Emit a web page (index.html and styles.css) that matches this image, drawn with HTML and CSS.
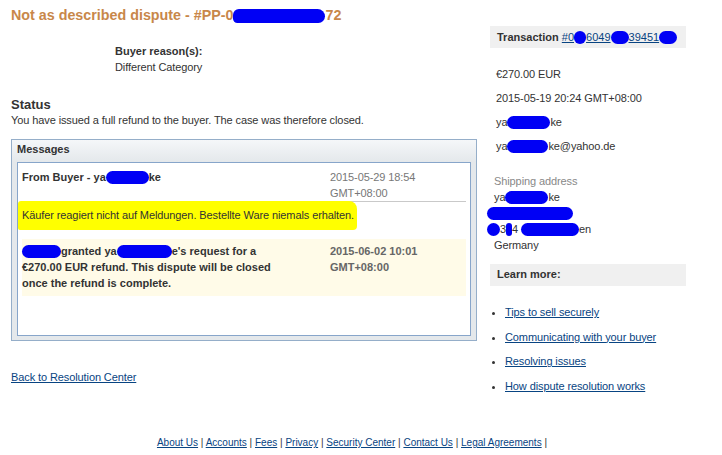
FILE: index.html
```html
<!DOCTYPE html>
<html lang="en">
<head>
    <meta charset="UTF-8">
    <title>Not as described dispute</title>
    <link rel="stylesheet" href="styles.css">
</head>
<body>

    <div class="page">
        <div class="main">
            <h1 class="title">Not as described dispute - #PP-0<span class="blob blob-title"></span>72</h1>

            <div class="reason">
                <div class="reason-label">Buyer reason(s):</div>
                <div>Different Category</div>
            </div>

            <h2 class="status-title">Status</h2>
            <p class="status-text">You have issued a full refund to the buyer. The case was therefore closed.</p>

            <div class="messages">
                <div class="messages-head">Messages</div>
                <div class="messages-body">
                    <div class="msg">
                        <div class="msg-row">
                            <div class="msg-from">From Buyer - ya<span class="blob blob-name"></span>ke</div>
                            <div class="msg-date">2015-05-29 18:54<br>GMT+08:00</div>
                        </div>
                        <div class="msg-text"><span class="marker">Käufer reagiert nicht auf Meldungen. Bestellte Ware niemals erhalten.</span></div>
                    </div>
                    <div class="msg msg-system">
                        <div class="msg-row msg-row-plain">
                            <div class="msg-from"><span class="blob blob-who"></span>granted ya<span class="blob blob-name2"></span>e's request for a €270.00 EUR refund. This dispute will be closed once the refund is complete.</div>
                            <div class="msg-date">2015-06-02 10:01<br>GMT+08:00</div>
                        </div>
                    </div>
                </div>
            </div>

            <p class="back"><a href="#">Back to Resolution Center</a></p>
        </div>

        <aside class="side">
            <div class="side-head">Transaction <a href="#" class="txn-link">#0<span class="blob blob-s"></span>6049<span class="blob blob-m"></span>39451<span class="blob blob-m"></span></a></div>

            <div class="info">
                <p>€270.00 EUR</p>
                <p>2015-05-19 20:24 GMT+08:00</p>
                <p>ya<span class="blob blob-name"></span>ke</p>
                <p>ya<span class="blob blob-mail"></span>ke@yahoo.de</p>
            </div>

            <div class="ship">
                <div class="ship-label">Shipping address</div>
                <div>ya<span class="blob blob-name"></span>ke</div>
                <div><span class="blob blob-street"></span></div>
                <div><span class="blob blob-zip"></span>3<span class="blob blob-dot"></span>4 <span class="blob blob-city"></span>en</div>
                <div>Germany</div>
            </div>

            <div class="learn-head">Learn more:</div>
            <ul class="learn-list">
                <li><a href="#">Tips to sell securely</a></li>
                <li><a href="#">Communicating with your buyer</a></li>
                <li><a href="#">Resolving issues</a></li>
                <li><a href="#">How dispute resolution works</a></li>
            </ul>
        </aside>
    </div>

    <div class="footer">
        <a href="#">About Us</a> | <a href="#">Accounts</a> | <a href="#">Fees</a> | <a href="#">Privacy</a> | <a href="#">Security Center</a> | <a href="#">Contact Us</a> | <a href="#">Legal Agreements</a> |
    </div>

</body>
</html>
```

FILE: styles.css
```css
body {
    margin: 0;
    font-family: "Liberation Sans", Arial, sans-serif;
    font-size: 11px;
    line-height: 16px;
    letter-spacing: -0.1px;
    color: #333;
    background-color: #ffffff;
}
a {
    color: #084482;
}
.page {
    display: flex;
    padding-left: 11px;
}
.main {
    width: 466px;
}
.side {
    width: 196px;
    margin-left: 13px;
}

/* blue scribbles over private data */
.blob {
    display: inline-block;
    height: 13px;
    vertical-align: -3px;
    background: #0000f5;
    border-radius: 7px;
}
.blob-title {
    width: 92px;
    height: 14px;
    border-radius: 8px 10px 9px 6px;
}
.blob-name { width: 43px; }
.blob-name2 { width: 55px; }
.blob-who { width: 39px; }
.blob-mail { width: 41px; }
.blob-s { width: 12px; }
.blob-m { width: 18px; }
.blob-street { width: 86px; margin-left: -7px; }
.blob-zip { width: 13px; margin-left: -7px; }
.blob-dot { width: 6px; }
.blob-city { width: 58px; }

.title {
    margin: 0;
    padding-top: 6px;
    font-size: 14.3px;
    line-height: 18px;
    letter-spacing: 0;
    color: #c8874a;
    white-space: nowrap;
}
.reason {
    margin: 19px 0 0 104px;
}
.reason-label {
    font-weight: bold;
    letter-spacing: 0;
}
.status-title {
    margin: 21px 0 0;
    font-size: 13px;
    line-height: 17px;
    letter-spacing: 0;
}
.status-text {
    margin: 0;
    line-height: 14px;
}

.messages {
    margin-top: 12px;
    padding: 0 5px 4px;
    border: 1px solid #95aec9;
    background: linear-gradient(#f5f7f9, #e4e8eb 22px);
}
.messages-head {
    font-weight: bold;
    letter-spacing: 0;
    line-height: 18px;
    padding-bottom: 4px;
}
.messages-body {
    box-sizing: border-box;
    height: 174px;
    padding: 6px 4px 0;
    background: #fff;
    border: 1px solid #87a5ca;
}
.msg-row {
    display: grid;
    grid-template-columns: 265px 1fr;
    column-gap: 43px;
    border-bottom: 1px solid #c9c9c9;
}
.msg-row-plain {
    border-bottom: none;
}
.msg-from {
    font-weight: bold;
    letter-spacing: 0;
}
.msg-date {
    color: #777;
}
.msg-text {
    margin: 5px 0 16px;
}
.marker {
    padding: 8px 3px 9px 4px;
    margin-left: -4px;
    background: #ffff00;
    border-radius: 3px 8px 4px 2px;
}
.msg-system {
    padding: 4px 0 5px;
    background: #fffbe8;
}
.msg-system .msg-date {
    font-weight: bold;
    letter-spacing: 0;
    color: #666;
}
.back {
    margin: 28px 0 0;
}

.side-head {
    margin-top: 26px;
    padding-left: 7px;
    line-height: 22px;
    font-weight: bold;
    letter-spacing: 0;
    background: #f0f0f0;
}
.txn-link {
    font-weight: normal;
}
.info {
    margin-top: 18px;
    padding-left: 6px;
}
.info p {
    margin: 0 0 8px;
}
.ship {
    margin-top: 19px;
    padding-left: 4px;
}
.ship-label {
    color: #888;
}
.learn-head {
    margin-top: 11px;
    padding: 0 0 2px 7px;
    line-height: 20px;
    font-weight: bold;
    letter-spacing: 0;
    background: #f0f0f0;
}
.learn-list {
    margin: 18px 0 0;
    padding-left: 15px;
}
.learn-list li {
    margin-bottom: 8.7px;
}
.learn-list li:last-child {
    margin-bottom: 0;
}
.footer {
    margin-top: 42px;
    padding-right: 18px;
    text-align: center;
    font-size: 10px;
    line-height: 14px;
    letter-spacing: 0;
}
```
